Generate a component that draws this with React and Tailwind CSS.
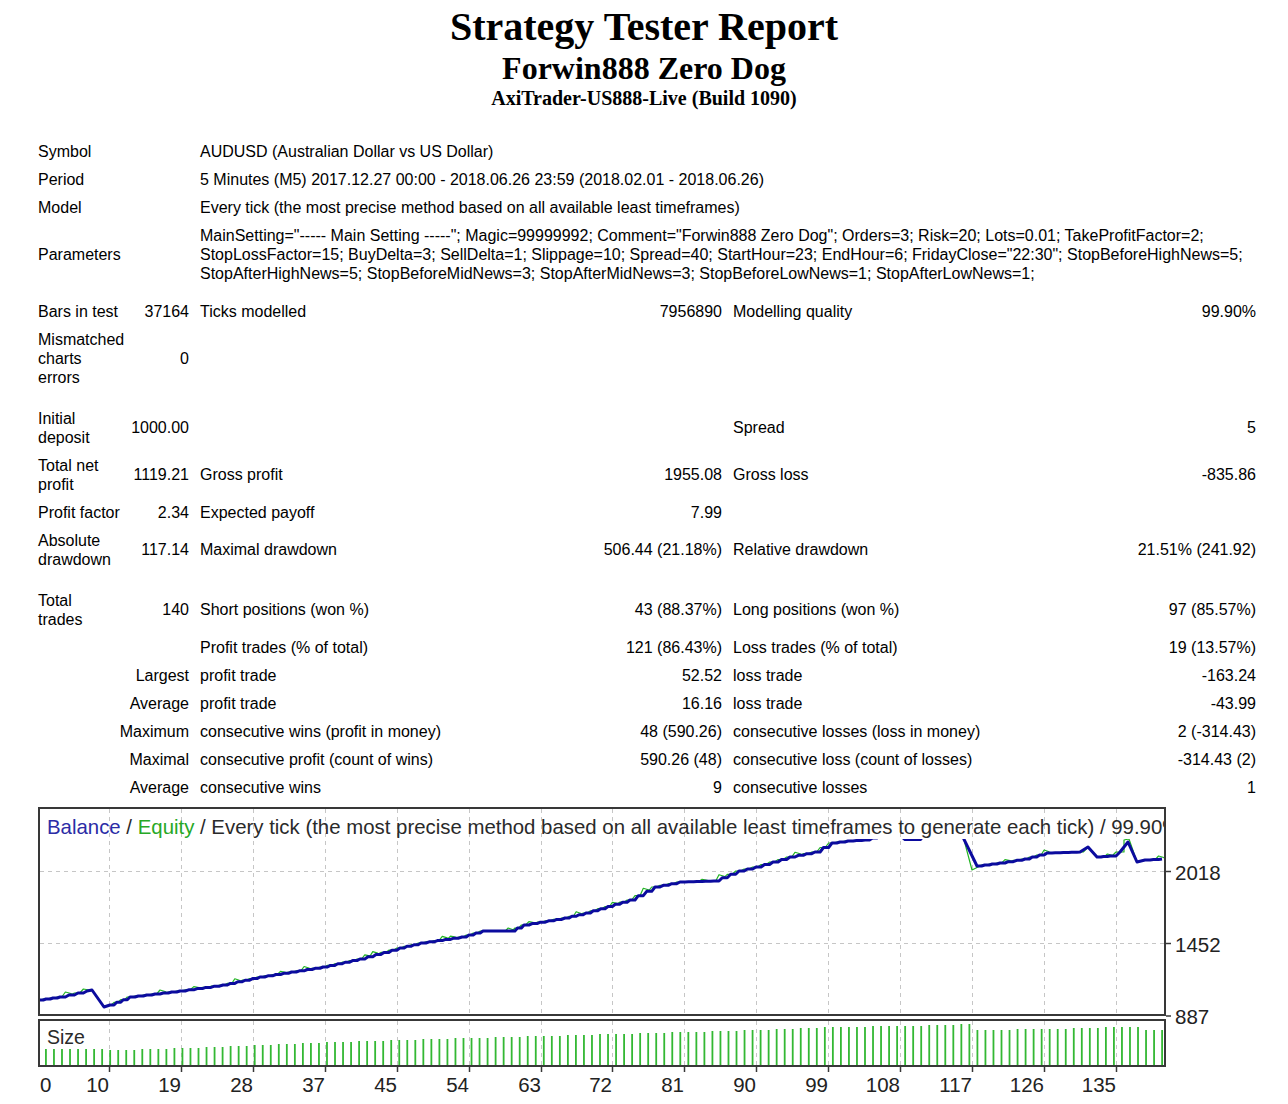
import React from "react";

const KEY = [
  [39, 1000], [60, 997], [87, 991], [92, 990], [104, 1007], [110, 1005], [130, 997], [180, 991],
  [223, 985], [260, 977], [323, 967], [360, 959], [400, 948], [421, 943], [462, 937],
  [483, 931], [511, 931], [524, 925], [565, 918], [586, 913], [630, 900], [655, 887],
  [680, 882], [714, 881], [739, 871], [756, 867], [790, 857], [815, 852], [832, 843],
  [848, 841], [865, 840], [880, 836], [897, 833], [905, 839.5], [914, 839.5], [925, 833],
  [945, 829], [958, 827], [977, 866, [[972, 870], [980, 866]]], [1000, 863], [1025, 859],
  [1047, 853], [1080, 852], [1088, 847], [1097, 857], [1110, 856], [1120, 852],
  [1128, 842, [[1124, 840], [1129, 839]]], [1137, 862], [1145, 860], [1162, 859],
];

function buildLines() {
  const bal = [[KEY[0][0], KEY[0][1]]];
  const eq = [[KEY[0][0], KEY[0][1] - 1]];
  let s = 0;
  for (let j = 0; j < KEY.length - 1; j++) {
    const [x0, y0] = KEY[j];
    const [x1, y1, eqOverride] = KEY[j + 1];
    const dx = x1 - x0;
    const steep = Math.abs(y1 - y0) / dx > 1.2;
    if (steep || dx < 10) {
      bal.push([x1, y1]);
      if (eqOverride) eqOverride.forEach((p) => eq.push(p));
      else eq.push([x1, y1]);
      continue;
    }
    const n = Math.max(1, Math.round(dx / 8));
    const w = dx / n;
    for (let k = 0; k < n; k++) {
      const xa = x0 + k * w;
      const ya = y0 + ((y1 - y0) * k) / n;
      const yb = y0 + ((y1 - y0) * (k + 1)) / n;
      bal.push([xa + w * 0.6, ya]);
      bal.push([xa + w, yb]);
      s++;
      const bump = s % 9 === 4 ? 3 : s % 11 === 6 ? 2 : 0;
      eq.push([xa + w * 0.2, ya]);
      eq.push([xa + w * 0.6, yb - bump]);
      eq.push([xa + w * 1.2, yb - bump * 0.5]);
      eq.push([xa + w * 1.4, yb]);
    }
    if (eqOverride) eqOverride.forEach((p) => eq.push(p));
  }
  const toD = (pts) => pts.map((p, i) => (i ? "L" : "M") + p[0].toFixed(1) + " " + p[1].toFixed(1)).join(" ");
  return { bal: toD(bal), eq: toD(eq) };
}

const SIZE_KEY = [
  [1, 1049], [8, 1049], [10, 1050], [19, 1048], [28, 1045], [37, 1042], [45, 1040],
  [54, 1038], [63, 1036], [72, 1034], [81, 1032], [90, 1030], [99, 1027], [108, 1026],
  [116, 1024], [117, 1030], [126, 1029], [135, 1027], [137, 1027], [138, 1030], [140, 1030],
];

function sizeTop(i) {
  for (let j = 0; j < SIZE_KEY.length - 1; j++) {
    const [a, ya] = SIZE_KEY[j];
    const [b, yb] = SIZE_KEY[j + 1];
    if (i >= a && i <= b) return Math.round(ya + ((yb - ya) * (i - a)) / (b - a));
  }
  return 1030;
}

const GRID_X = [109, 181, 253, 325, 397, 469, 541, 612, 684, 756, 828, 900, 972, 1044, 1116];
const X_LABELS = ["10", "19", "28", "37", "45", "54", "63", "72", "81", "90", "99", "108", "117", "126", "135"];

function Chart() {
  const { bal, eq } = buildLines();
  const bars = [];
  for (let i = 1; i <= 140; i++) {
    const x = 38 + 8.03 * i;
    const top = sizeTop(i);
    bars.push(<rect key={i} x={x - 1} y={top} width="1.8" height={1065 - top} fill="#33b833" />);
  }
  const font = "'Liberation Sans', Arial, sans-serif";
  return (
    <svg className="block mt-[4px]" width="1288" height="299" viewBox="0 805 1288 299">
      <defs>
        <clipPath id="mainClip">
          <rect x="40" y="809" width="1124" height="205" />
        </clipPath>
        <clipPath id="plotClip">
          <rect x="40" y="839" width="1124" height="175" />
        </clipPath>
      </defs>
      <g stroke="#c6c6c6" strokeWidth="1" strokeDasharray="4 4">
        {GRID_X.map((x) => (
          <g key={x}>
            <line x1={x + 0.5} y1="809" x2={x + 0.5} y2="1015" />
            <line x1={x + 0.5} y1="1021" x2={x + 0.5} y2="1065" />
          </g>
        ))}
        <line x1="40" y1="871.5" x2="1164" y2="871.5" />
        <line x1="40" y1="943.5" x2="1164" y2="943.5" />
      </g>
      <g clipPath="url(#mainClip)">
        <text x="47" y="834" fontSize="20.4" fontFamily={font} fill="#2a2a2a">
          <tspan fill="#2c2ca6">Balance</tspan>
          <tspan> / </tspan>
          <tspan fill="#26a826">Equity</tspan>
          <tspan> / Every tick (the most precise method based on all available least timeframes to generate each tick) / 99.90%</tspan>
        </text>
      </g>
      <g clipPath="url(#plotClip)" fill="none" strokeLinejoin="round">
        <path d={eq} stroke="#22b422" strokeWidth="1.2" />
        <path d={bal} stroke="#0b0b9e" strokeWidth="3" />
      </g>
      <rect x="39" y="808" width="1126" height="207" fill="none" stroke="#383838" strokeWidth="2" />
      {bars}
      <rect x="39" y="1020" width="1126" height="46" fill="none" stroke="#383838" strokeWidth="2" />
      <text x="47" y="1044" fontSize="19.5" fontFamily={font} fill="#2a2a2a">Size</text>
      <g stroke="#383838" strokeWidth="1.5">
        <line x1="1166" y1="871.5" x2="1171" y2="871.5" />
        <line x1="1166" y1="943.5" x2="1171" y2="943.5" />
        <line x1="1166" y1="1016" x2="1171" y2="1016" />
        {GRID_X.map((x) => (
          <line key={x} x1={x + 0.5} y1="1067" x2={x + 0.5} y2="1072" />
        ))}
      </g>
      <g fontSize="20.5" fontFamily={font} fill="#222">
        <text x="1175" y="880">2018</text>
        <text x="1175" y="952">1452</text>
        <text x="1175" y="1024">887</text>
      </g>
      <g fontSize="20.5" fontFamily={font} fill="#222">
        <text x="40" y="1092">0</text>
        {GRID_X.map((x, i) => (
          <text key={x} x={x} y="1092" textAnchor="end">
            {X_LABELS[i]}
          </text>
        ))}
      </g>
    </svg>
  );
}

function Cell2({ label, value }) {
  return (
    <>
      <div className="w-[88px] shrink-0 whitespace-nowrap">{label}</div>
      <div className="w-[63px] shrink-0 text-right whitespace-nowrap">{value}</div>
    </>
  );
}

function StatRow({ h = "h-[28px]", l1, v1, l2, v2, l3, v3, right }) {
  return (
    <div className={`flex items-center ${h}`}>
      {right !== undefined ? (
        <div className="w-[151px] shrink-0 text-right whitespace-nowrap">{right}</div>
      ) : (
        <Cell2 label={l1} value={v1} />
      )}
      <div className="ml-[11px] w-[522px] shrink-0 flex justify-between items-center whitespace-nowrap">
        <span>{l2}</span>
        <span>{v2}</span>
      </div>
      <div className="ml-[11px] w-[523px] shrink-0 flex justify-between items-center whitespace-nowrap">
        <span>{l3}</span>
        <span>{v3}</span>
      </div>
    </div>
  );
}

function InfoRow({ h = "h-[28px]", label, children }) {
  return (
    <div className={`flex items-center ${h}`}>
      <div className="w-[162px] shrink-0">{label}</div>
      <div className="whitespace-nowrap">{children}</div>
    </div>
  );
}

export default function App() {
  return (
    <div className="w-[1288px] h-[1104px] overflow-hidden bg-white text-black">
      <div className="flex flex-col items-center pt-[4px] font-bold [font-family:'Liberation_Serif','Times_New_Roman',serif]">
        <div className="text-[40px] leading-[46px]">Strategy Tester Report</div>
        <div className="text-[32px] leading-[36px]">Forwin888 Zero Dog</div>
        <div className="text-[20px] leading-[24px]">AxiTrader-US888-Live (Build 1090)</div>
      </div>
      <div className="mt-[27px] pl-[38px] flex flex-col text-[16px] leading-[19px] [font-family:'Liberation_Sans',Arial,sans-serif]">
        <InfoRow label="Symbol">AUDUSD (Australian Dollar vs US Dollar)</InfoRow>
        <InfoRow label="Period">5 Minutes (M5) 2017.12.27 00:00 - 2018.06.26 23:59 (2018.02.01 - 2018.06.26)</InfoRow>
        <InfoRow label="Model">Every tick (the most precise method based on all available least timeframes)</InfoRow>
        <InfoRow label="Parameters" h="h-[66px]">
          MainSetting="----- Main Setting -----"; Magic=99999992; Comment="Forwin888 Zero Dog"; Orders=3; Risk=20; Lots=0.01; TakeProfitFactor=2;
          <br />
          StopLossFactor=15; BuyDelta=3; SellDelta=1; Slippage=10; Spread=40; StartHour=23; EndHour=6; FridayClose="22:30"; StopBeforeHighNews=5;
          <br />
          StopAfterHighNews=5; StopBeforeMidNews=3; StopAfterMidNews=3; StopBeforeLowNews=1; StopAfterLowNews=1;
        </InfoRow>
        <div className="h-[10px]" />
        <StatRow l1="Bars in test" v1="37164" l2="Ticks modelled" v2="7956890" l3="Modelling quality" v3="99.90%" />
        <StatRow
          h="h-[66px]"
          l1={
            <>
              Mismatched
              <br />
              charts
              <br />
              errors
            </>
          }
          v1="0"
        />
        <div className="h-[13px]" />
        <StatRow
          h="h-[47px]"
          l1={
            <>
              Initial
              <br />
              deposit
            </>
          }
          v1="1000.00"
          l3="Spread"
          v3="5"
        />
        <StatRow
          h="h-[47px]"
          l1={
            <>
              Total net
              <br />
              profit
            </>
          }
          v1="1119.21"
          l2="Gross profit"
          v2="1955.08"
          l3="Gross loss"
          v3="-835.86"
        />
        <StatRow l1="Profit factor" v1="2.34" l2="Expected payoff" v2="7.99" />
        <StatRow
          h="h-[47px]"
          l1={
            <>
              Absolute
              <br />
              drawdown
            </>
          }
          v1="117.14"
          l2="Maximal drawdown"
          v2="506.44 (21.18%)"
          l3="Relative drawdown"
          v3="21.51% (241.92)"
        />
        <div className="h-[13px]" />
        <StatRow
          h="h-[47px]"
          l1={
            <>
              Total
              <br />
              trades
            </>
          }
          v1="140"
          l2="Short positions (won %)"
          v2="43 (88.37%)"
          l3="Long positions (won %)"
          v3="97 (85.57%)"
        />
        <StatRow right="" l2="Profit trades (% of total)" v2="121 (86.43%)" l3="Loss trades (% of total)" v3="19 (13.57%)" />
        <StatRow right="Largest" l2="profit trade" v2="52.52" l3="loss trade" v3="-163.24" />
        <StatRow right="Average" l2="profit trade" v2="16.16" l3="loss trade" v3="-43.99" />
        <StatRow right="Maximum" l2="consecutive wins (profit in money)" v2="48 (590.26)" l3="consecutive losses (loss in money)" v3="2 (-314.43)" />
        <StatRow right="Maximal" l2="consecutive profit (count of wins)" v2="590.26 (48)" l3="consecutive loss (count of losses)" v3="-314.43 (2)" />
        <StatRow right="Average" l2="consecutive wins" v2="9" l3="consecutive losses" v3="1" />
      </div>
      <Chart />
    </div>
  );
}
